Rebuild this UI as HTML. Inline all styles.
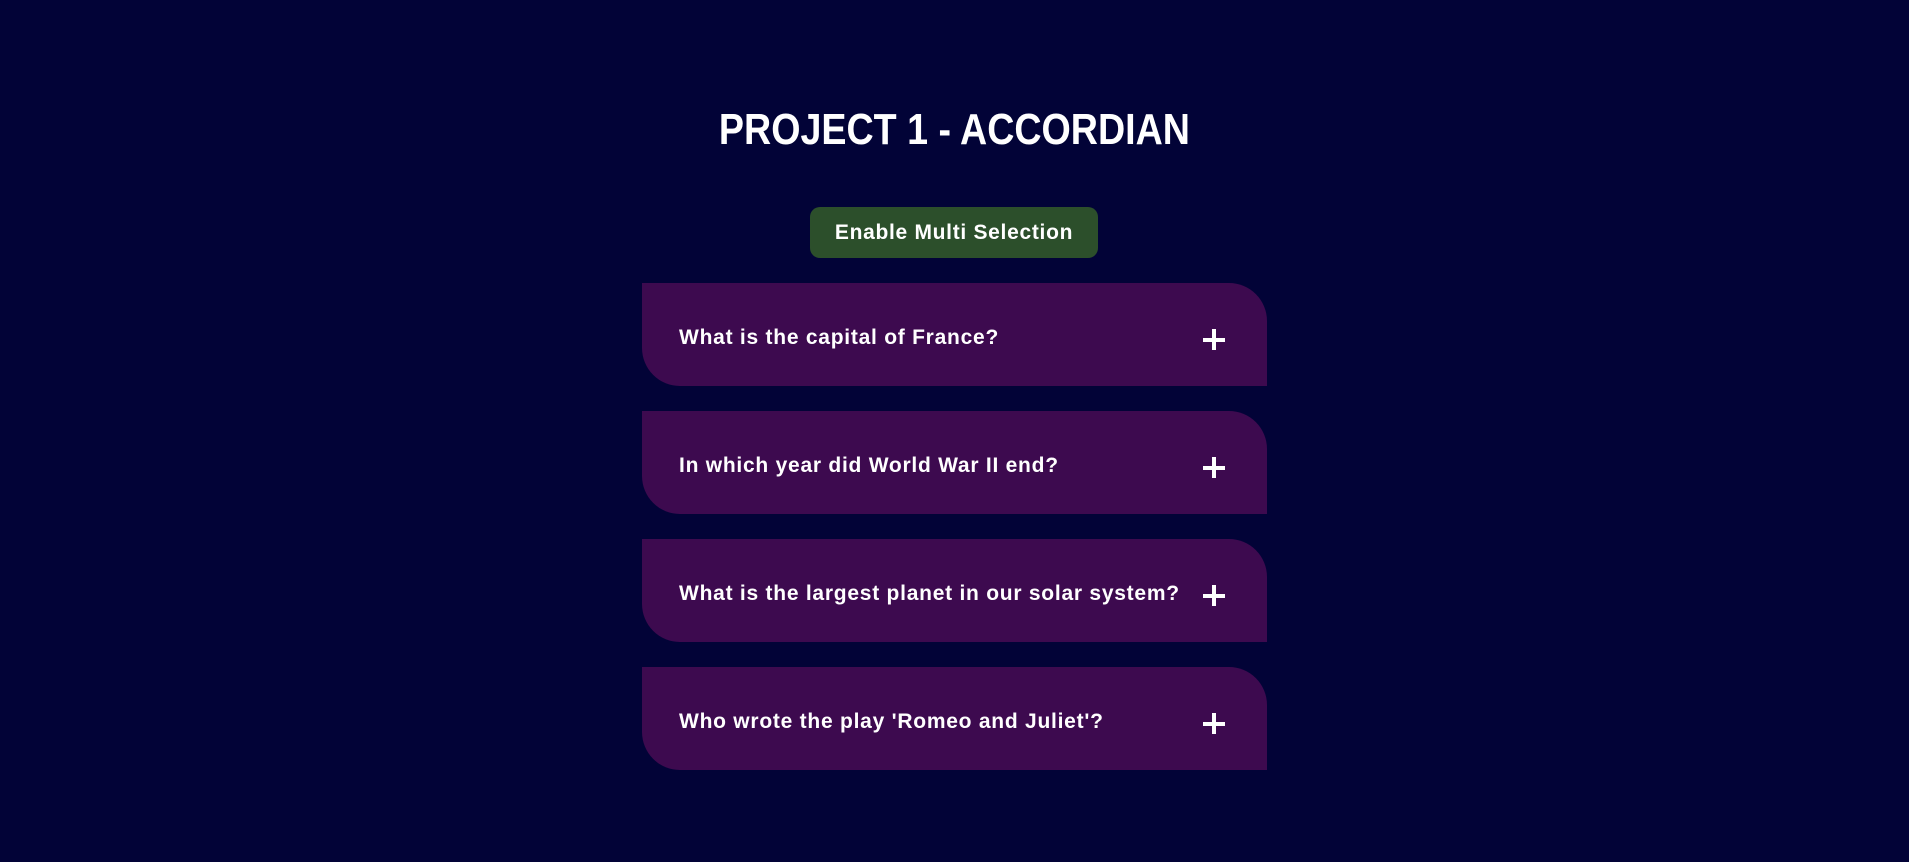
<!DOCTYPE html>
<html><head><meta charset="utf-8"><style>
html,body{margin:0;padding:0;background:#020337;width:1909px;height:862px;overflow:hidden;font-family:"Liberation Sans",sans-serif;color:#fff}
.title{position:absolute;left:0;width:1909px;top:108px;text-align:center;font-weight:bold;font-size:44px;line-height:44px}
.title span{display:inline-block;transform:scaleX(0.855)}
.btn{position:absolute;left:810px;top:207px;width:288px;height:51px;background:#2c4f2b;border-radius:10px;display:flex;align-items:center;justify-content:center;font-weight:bold;font-size:21px;letter-spacing:0.7px}
.item{position:absolute;left:642px;width:625px;height:103px;background:#3d0a4f;border-radius:0 38px 0 38px}
.item .q{position:absolute;left:37px;top:43px;font-weight:bold;font-size:21px;line-height:24px;letter-spacing:0.75px}
.plus{position:absolute;left:561px;top:46px;width:22px;height:21px}
.plus:before{content:"";position:absolute;left:0;top:9px;width:22px;height:4px;background:#fff}
.plus:after{content:"";position:absolute;left:9px;top:0;width:4px;height:21px;background:#fff}
</style></head><body>
<div class="title"><span>PROJECT 1 - ACCORDIAN</span></div>
<div class="btn">Enable Multi Selection</div>
<div class="item" style="top:283px"><div class="q">What is the capital of France?</div><div class="plus"></div></div>
<div class="item" style="top:411px"><div class="q">In which year did World War II end?</div><div class="plus"></div></div>
<div class="item" style="top:539px"><div class="q">What is the largest planet in our solar system?</div><div class="plus"></div></div>
<div class="item" style="top:667px"><div class="q">Who wrote the play 'Romeo and Juliet'?</div><div class="plus"></div></div>
</body></html>
